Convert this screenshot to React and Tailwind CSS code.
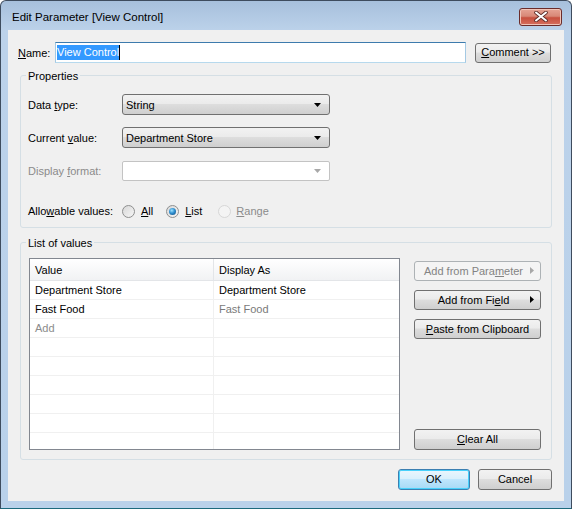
import React from "react";

const btnNormal =
  "flex items-center justify-center h-[20px] rounded-[3px] border border-[#707070] bg-[linear-gradient(#f2f2f2_0%,#ebebeb_45%,#dddddd_50%,#cfcfcf_100%)] text-black";
const btnDisabled =
  "flex items-center justify-center h-[20px] rounded-[3px] border border-[#adb2b5] bg-[#f4f4f4] text-[#838383]";
const btnDefault =
  "flex items-center justify-center h-[20px] rounded-[3px] border border-[#3c7fb1] bg-[linear-gradient(#eaf6fd_0%,#d9f0fc_45%,#bee6fd_50%,#a7d9f5_100%)] shadow-[inset_0_0_0_1px_#48d1fb] text-black";

function DownArrow({ color = "#000" }) {
  return (
    <svg width="7" height="4" viewBox="0 0 7 4">
      <path d="M0 0h7L3.5 4z" fill={color} />
    </svg>
  );
}

function RightArrow({ color = "#000" }) {
  return (
    <svg width="4" height="7" viewBox="0 0 4 7">
      <path d="M0 0v7l4-3.5z" fill={color} />
    </svg>
  );
}

function Select({ value, disabled }) {
  if (disabled) {
    return (
      <div className="flex items-center justify-between w-[208px] h-[20px] rounded-[2px] border border-[#c3c3c3] bg-white pl-[4px] pr-[8px]">
        <span />
        <DownArrow color="#a8a8a8" />
      </div>
    );
  }
  return (
    <div className="flex items-center justify-between w-[208px] h-[21px] rounded-[3px] border border-[#707070] bg-[linear-gradient(#f2f2f2_0%,#ebebeb_45%,#dddddd_50%,#cfcfcf_100%)] pl-[3px] pr-[8px]">
      <span className="pt-[1px]">{value}</span>
      <DownArrow />
    </div>
  );
}

function Radio({ checked, disabled }) {
  if (disabled) {
    return <div className="w-[13px] h-[13px] rounded-full border border-[#d7d7d7] bg-[#f4f4f4]" />;
  }
  return (
    <div className="flex items-center justify-center w-[13px] h-[13px] rounded-full border border-[#8e8f8f] bg-[linear-gradient(135deg,#d8d8d8,#f6f6f6)]">
      {checked && (
        <div className="w-[7px] h-[7px] rounded-full bg-[radial-gradient(circle_at_40%_35%,#9fe3ff_0%,#2f8fd0_45%,#10477a_100%)]" />
      )}
    </div>
  );
}

function Group({ title, children, className }) {
  return (
    <div className={"mx-[12px] w-[532px] rounded-[3px] border border-[#d5dfe5] flex flex-col " + className}>
      <span className="-mt-[6px] ml-[5px] px-[2px] w-fit leading-[13px] bg-[#f0f0f0]">{title}</span>
      {children}
    </div>
  );
}

const rows = [
  ["Department Store", "Department Store", false],
  ["Fast Food", "Fast Food", true],
  ["Add", "", false],
  ["", ""],
  ["", ""],
  ["", ""],
  ["", ""],
  ["", ""],
  ["", ""],
];

export default function App() {
  return (
    <div className="w-[572px] h-[509px] font-['Liberation_Sans',Arial,sans-serif] text-[11px] text-black">
      <div className="w-[572px] h-[509px] rounded-t-[6px] border border-[#3e4c5e] border-b-[#1b6a7d] bg-[linear-gradient(#a7c0dc_0px,#bcd2ea_30px,#b9d1ea_100%)] flex flex-col">
        {/* title bar */}
        <div className="h-[29px] flex items-center justify-between pl-[11px] pr-[9px]">
          <span className="text-[11.5px] pt-[5px]">Edit Parameter [View Control]</span>
          <div className="mt-[2px] w-[43px] h-[18px] rounded-[3px] border border-[#6b2c2a] bg-[linear-gradient(#e6a495_0%,#d88877_45%,#c7503e_55%,#d6705f_100%)] flex items-center justify-center shadow-[inset_0_0_0_1px_#f0c4b8]">
            <svg width="14" height="11" viewBox="0 0 14 11">
              <path d="M2 1.5L12 9.5M12 1.5L2 9.5" stroke="#5b2c28" strokeWidth="3.6" strokeLinecap="round" />
              <path d="M2 1.5L12 9.5M12 1.5L2 9.5" stroke="#fff" strokeWidth="2" strokeLinecap="round" />
            </svg>
          </div>
        </div>

        {/* client */}
        <div className="ml-[7px] w-[556px] h-[471px] bg-[#f0f0f0] flex flex-col">
          {/* name row */}
          <div className="flex items-center mt-[12px] pl-[10px] h-[21px]">
            <span className="w-[37px] pt-[1px]">
              <u className="underline-offset-1">N</u>ame:
            </span>
            <div className="w-[411px] h-[21px] border border-[#a4c9e3] border-t-[#3d7bad] border-b-[#b7d9ed] bg-white flex items-center pl-[1px]">
              <span className="bg-[#3399ff] text-white leading-[15px]">View Control</span>
              <span className="w-[1px] h-[15px] bg-black" />
            </div>
            <div className={btnNormal + " ml-[9px] w-[76px]"}>
              <span>
                <u className="underline-offset-1">C</u>omment &gt;&gt;
              </span>
            </div>
          </div>

          {/* properties */}
          <Group title="Properties" className="mt-[12px] h-[153px]">
            <div className="flex items-center mt-[11px] pl-[7px]">
              <span className="w-[94px] pt-[1px]">
                Data <u className="underline-offset-1">t</u>ype:
              </span>
              <Select value="String" />
            </div>
            <div className="flex items-center mt-[12px] pl-[7px]">
              <span className="w-[94px] pt-[1px]">
                Current <u className="underline-offset-1">v</u>alue:
              </span>
              <Select value="Department Store" />
            </div>
            <div className="flex items-center mt-[13px] pl-[7px]">
              <span className="w-[94px] pt-[1px] text-[#8b8b8b]">
                Display <u className="underline-offset-1">f</u>ormat:
              </span>
              <Select disabled />
            </div>
            <div className="flex items-center mt-[24px] pl-[7px] h-[13px]">
              <span className="w-[94px]">
                Allo<u className="underline-offset-1">w</u>able values:
              </span>
              <Radio />
              <span className="ml-[6px]">
                <u className="underline-offset-1">A</u>ll
              </span>
              <div className="ml-[13px]">
                <Radio checked />
              </div>
              <span className="ml-[6px]">
                <u className="underline-offset-1">L</u>ist
              </span>
              <div className="ml-[16px]">
                <Radio disabled />
              </div>
              <span className="ml-[5px] text-[#8b8b8b]">
                <u className="underline-offset-1">R</u>ange
              </span>
            </div>
          </Group>

          {/* list of values */}
          <Group title="List of values" className="mt-[14px] h-[218px]">
            <div className="flex mt-[8px] pl-[8px]">
              <div className="w-[371px] h-[192px] border border-[#828790] bg-white flex flex-col overflow-hidden">
                <div className="h-[22px] shrink-0 flex bg-[linear-gradient(#ffffff,#f1f2f4)] border-b border-[#e3e5e8]">
                  <div className="w-[184px] pl-[5px] pt-[1px] flex items-center border-r border-[#e3e5e8]">Value</div>
                  <div className="flex-1 pl-[5px] pt-[1px] flex items-center">Display As</div>
                </div>
                {rows.map((r, i) => (
                  <div key={i} className="h-[19px] shrink-0 flex border-b border-[#f0f0f0]">
                    <div className={"w-[184px] pl-[5px] pt-[1px] flex items-center border-r border-[#f0f0f0] " + (r[0] === "Add" ? "text-[#8b8b8b]" : "")}>
                      {r[0]}
                    </div>
                    <div className={"flex-1 pl-[5px] pt-[1px] flex items-center " + (r[2] ? "text-[#7a7a7a]" : "")}>{r[1]}</div>
                  </div>
                ))}
              </div>
              <div className="ml-[14px] w-[127px] flex flex-col">
                <div className={btnDisabled + " mt-[3px] relative"}>
                  <span className="-ml-[8px]">
                    Add from Para<u className="underline-offset-1">m</u>eter
                  </span>
                  <span className="absolute right-[6px] top-[5px]">
                    <RightArrow color="#a8a8a8" />
                  </span>
                </div>
                <div className={btnNormal + " mt-[9px] relative"}>
                  <span className="-ml-[8px]">
                    Add from Fi<u className="underline-offset-1">e</u>ld
                  </span>
                  <span className="absolute right-[6px] top-[5px]">
                    <RightArrow />
                  </span>
                </div>
                <div className={btnNormal + " mt-[9px]"}>
                  <span>
                    <u className="underline-offset-1">P</u>aste from Clipboard
                  </span>
                </div>
                <div className={btnNormal + " mt-[90px] h-[21px]"}>
                  <span>
                    <u className="underline-offset-1">C</u>lear All
                  </span>
                </div>
              </div>
            </div>
          </Group>

          {/* bottom buttons */}
          <div className="flex mt-[9px] pl-[390px]">
            <div className={btnDefault + " w-[72px] h-[21px]"}>OK</div>
            <div className={btnNormal + " ml-[8px] w-[74px] h-[21px]"}>Cancel</div>
          </div>
        </div>
      </div>
    </div>
  );
}
